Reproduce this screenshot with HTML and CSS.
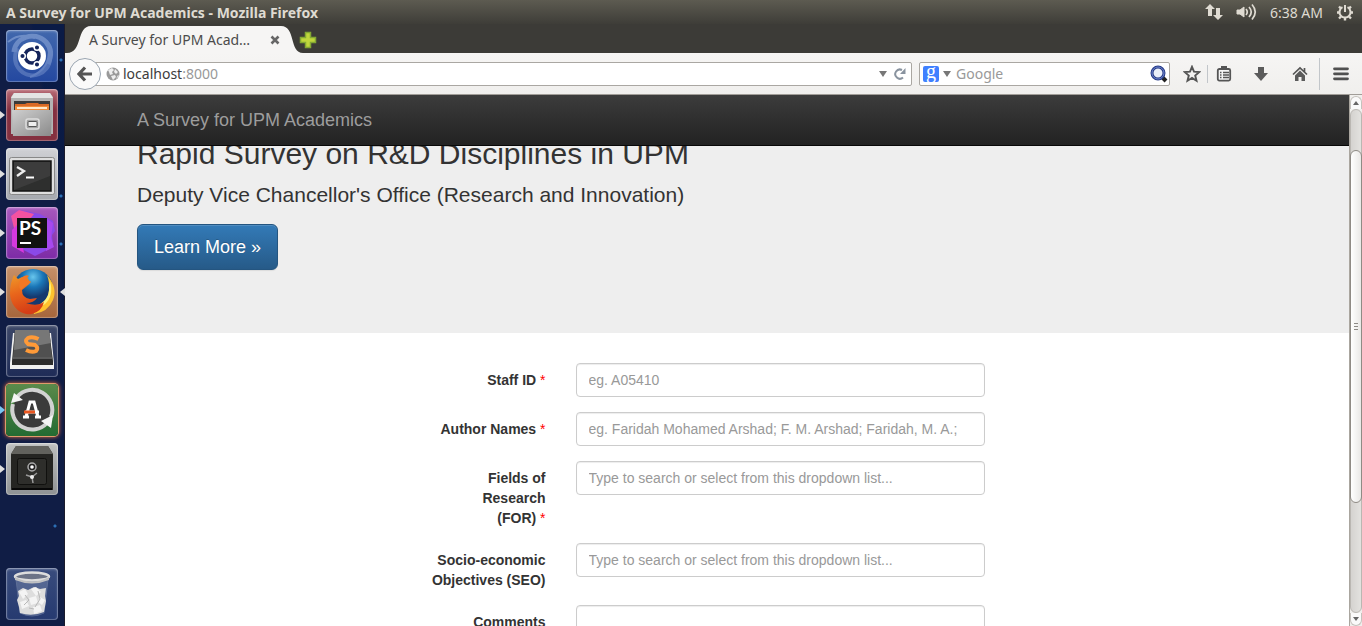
FILE: index.html
```html
<!DOCTYPE html>
<html lang="en">
<head>
<meta charset="utf-8">
<title>A Survey for UPM Academics</title>
<link rel="stylesheet" href="styles.css">
</head>
<body>
<div class="desktop">
  <header class="panel">
    <span class="panel-title">A Survey for UPM Academics - Mozilla Firefox</span>
    <div class="indicators">
      <svg width="18" height="18" viewBox="0 0 18 18" fill="#dfdbd2"><path d="M5 1l5 5H7v7H3V6H0zM13 17l-5-5h3V5h4v7h3z"/></svg>
      <svg width="21" height="18" viewBox="0 0 21 18" fill="none" stroke="#dfdbd2" stroke-width="1.7"><path d="M1 7h3l4-3v10l-4-3H1z" fill="#dfdbd2" stroke-width="1"/><path d="M10 6q2.500 3 0 6M13 4q4.500 5 0 10M16 1.500q6.500 7.500 0 15"/></svg>
      <time class="clock">6:38 AM</time>
      <svg width="18" height="18" viewBox="0 0 18 18" fill="none" stroke="#dfdbd2" stroke-width="2"><path d="M6.500 4.200a5.500 5.500 0 1 0 5 0M9 2v7"/><path d="M1 9.500h2.500M14.500 9.500H17M9 15v2.500M3 3.500l2 2M15 3.500l-2 2M3 15.500l2-2M15 15.500l-2-2" stroke-width="2.400"/></svg>
    </div>
  </header>

  <div class="workspace">
    <nav class="launcher" aria-label="Launcher">
      <button class="app app-dash" aria-label="Dash">
        <svg viewBox="0 0 52 52"><g fill="none" stroke="#b5c9ef" opacity=".4"><path d="M8 22C9 8 28 0 40 12q8 9 2 22" stroke-width="5"/><path d="M44 29C43 44 25 51 14 40Q6 32 11 18" stroke-width="4" opacity=".7"/><path d="M2 12Q14 2 29 8M43 17q2 22-19 30" stroke-width="2"/></g><circle cx="26" cy="26" r="14" fill="#fff"/><circle cx="26" cy="26" r="7" fill="none" stroke="#15245a" stroke-width="3.500"/><g stroke="#fff" stroke-width="1.500" fill="#15245a"><circle cx="16.500" cy="26" r="2.800"/><circle cx="31" cy="17.500" r="2.800"/><circle cx="31" cy="34.500" r="2.800"/></g></svg>
      </button>
      <button class="app app-files running" aria-label="Files">
        <svg viewBox="0 0 52 52"><defs><linearGradient id="steel" x2="1" y2="1"><stop stop-color="#cfcfcf"/><stop offset="1" stop-color="#8a8a8a"/></linearGradient></defs><path d="M5 8l3-4h36l3 4v37H5z" fill="#b4b4b4"/><path d="M5 9l3-5h36l3 5z" fill="#e4e4e4"/><path d="M8 12h36v11H8z" fill="#3a3a3a"/><path d="M9 15h10l2-1h11l1 1h10v8H9z" fill="#d96a27"/><path d="M9 17h34v5H9z" fill="#f08c3c"/><path d="M11 18h30v2H11z" fill="#ffe9cc"/><path d="M6 21h40l-1 26H7z" fill="url(#steel)"/><rect x="20" y="30" width="13" height="10" rx="2" fill="#a4a4a4" stroke="#dedede" stroke-width="1.500"/><rect x="22" y="32.500" width="9" height="5" rx="1" fill="#eee" stroke="#555"/></svg>
      </button>
      <button class="app app-terminal running" aria-label="Terminal">
        <svg viewBox="0 0 52 52"><rect x="3.500" y="9.500" width="45" height="37" rx="2" fill="#dedede" stroke="#888"/><rect x="7" y="13" width="38" height="30" fill="#2e2f2e" stroke="#131313" stroke-width="1.500"/><path d="M8 14h36v14L8 42z" fill="#565656" opacity=".35"/><path d="M11 19l7 4-7 5" fill="none" stroke="#eee" stroke-width="2.300"/><path d="M20 29.500h8" stroke="#fff" stroke-width="2"/></svg>
      </button>
      <button class="app app-phpstorm running" aria-label="PhpStorm">
        <svg viewBox="0 0 52 52"><path d="M5 9L13 3l21 4 13 7 2 10-3 4 1 12-18 9-15-8-8-3 3-19z" fill="#8a49e8"/><path d="M5 9L13 3l15 4-12 15-7 3z" fill="#f552a0"/><path d="M6 23l7-7 5 30-12-7z" fill="#d638df"/><path d="M38 10l9 6-2 15 3 9-8 4z" fill="#a748ef"/><rect x="11" y="11" width="30" height="30" fill="#111"/><path d="M14 36h11" stroke="#fff" stroke-width="2"/><text x="13" y="28" class="ps-text">PS</text></svg>
      </button>
      <button class="app app-firefox running active" aria-label="Firefox">
        <svg viewBox="0 0 52 52"><defs><radialGradient id="globe" cx=".5" cy=".2"><stop stop-color="#68c6ed"/><stop offset=".5" stop-color="#1976b7"/><stop offset="1" stop-color="#15396f"/></radialGradient><linearGradient id="fox" y2="1" x2=".3"><stop stop-color="#ef9a29"/><stop offset=".5" stop-color="#e8641b"/><stop offset="1" stop-color="#d53d16"/></linearGradient></defs><circle cx="27" cy="23" r="20" fill="url(#globe)"/><path d="M41 9q11 13 6 25T28 48l-2-8q15 0 17-15 1-8-2-16z" fill="#ffc22e"/><path d="M44 15q4 15-5 23-5 4-11 3 16-6 15-20z" fill="#fff07a"/><path d="M8 9l4 4q5-3 9-2l3 5-3 4-5 4q0 8 8 9l7-1q-3 5-11 5 11 4 18-1-2 9-12 12C15 50 4 40 4 27q0-10 4-18z" fill="url(#fox)"/><path d="M15 12q5-4 8-2-3 2-3 5 4-1 5 1-2 3-6 4l-4 4q-4-4 0-12z" fill="#f27824"/></svg>
      </button>
      <button class="app app-sublime" aria-label="Sublime Text">
        <svg viewBox="0 0 52 52"><path d="M4 38L7 8h38l3 30v6H4z" fill="#f0f0f0"/><path d="M6 36L9 5h34l4 31v4H6z" fill="#2c2c2c"/><path d="M9 5h34l3 27H7z" fill="#505050"/><path d="M9 5h34l2 13L8 25z" fill="#777"/><path d="M7 33h39" stroke="#8a8a8a"/><path d="M32.500 14q-6-3-10.500-1-4 3 0 6l7 1q4 3 1 6-4 2-10-1" fill="none" stroke="#ff9a38" stroke-width="4"/></svg>
      </button>
      <button class="app app-updater running alert" aria-label="Software Updater">
        <svg viewBox="0 0 52 52"><circle cx="26" cy="26" r="19" fill="#3b3b3b"/><path d="M11 13a20 20 0 0 1 34 20M41 39A20 20 0 0 1 7 20" fill="none" stroke="#d2d2d2" stroke-width="4"/><path d="M5 19l3-10 9 7zM47 31l-2 13-10-7z" fill="#f4f4f4"/><path d="M20 33l4-15h4l4 15M17 33h6M29 33h6" fill="none" stroke="#fff" stroke-width="3"/><path d="M19 28h14" stroke="#fff" stroke-width="3"/><path d="M18 28h11" stroke="#e95721" stroke-width="3"/></svg>
      </button>
      <button class="app app-safe running" aria-label="Passwords">
        <svg viewBox="0 0 52 52"><path d="M5 11l5-8h32l5 8v36H5z" fill="#34342f"/><path d="M5 11l5-8h32l5 8z" fill="#62625d"/><rect x="5" y="11" width="42" height="36" rx="2" fill="#252522"/><rect x="11.500" y="15.500" width="29" height="26" rx="2" fill="#2e2e2b" stroke="#10100e"/><circle cx="26" cy="24" r="4" fill="#222" stroke="#aaa" stroke-width="1.500"/><circle cx="26" cy="24" r="1.800" fill="#fff"/><path d="M26 34l-6-2M26 34l5-4M26 34l1 6" stroke="#999" stroke-width="1.500"/><circle cx="26" cy="34" r="2" fill="#eee"/><path d="M6 46h40" stroke="#080808" stroke-width="2"/></svg>
      </button>
      <button class="app app-trash" aria-label="Trash">
        <svg viewBox="0 0 52 52"><path d="M10 11l4 34q12 6 24 0l4-34z" fill="#b7c5dc" opacity=".25" stroke="#dce5f2"/><path d="M12 23l5-3 5 2 6-3 6 2 6-1-1 8 1 5-2 11q-12 5-24 1l-1-6-2-7 2-4z" fill="#ddd"/><g fill="#f4f4f4"><path d="M13 24l6-3 3 5-5 5zM25 21l5-2 5 5-5 4zM23 30l7-2 2 7-7 2zM34 29l5 3-3 5-4-3zM14 34l6-2 3 6-7 3zM27 39l7-2 2 6-8 3z"/></g><path d="M19 27l4 5-5 5M32 23l2 8-5 8M23 40l5 1" stroke="#b8b8b8" fill="none"/><ellipse cx="26" cy="8.500" rx="17" ry="4" fill="#6c7386" stroke="#ddd" stroke-width="2.500"/><path d="M9 9q17 9 34 0v3q-17 7-34 0z" fill="#bfc0c2"/></svg>
      </button>
    </nav>

    <div class="browser">
      <div class="tabs">
        <button class="tab" aria-label="A Survey for UPM Academics">
          <svg class="tab-shape" viewBox="0 0 236 28" preserveAspectRatio="none"><path d="M0 28C16 28 9 1 24 1H214C229 1 222 28 236 28z" fill="#f6f5f4"/></svg>
          <span class="tab-title">A Survey for UPM Acad…</span>
          <svg width="10" height="10" viewBox="0 0 10 10"><path d="M1.500 1.500l7 7M8.500 1.500l-7 7" stroke="#666" stroke-width="2.600"/></svg>
        </button>
        <button class="new-tab" aria-label="Open new tab"><svg width="18" height="18" viewBox="0 0 18 18"><path d="M6.500 1.500h5v5h5v5h-5v5h-5v-5h-5v-5h5z" fill="#bfd63c" stroke="#83a832" stroke-width="1.500"/></svg></button>
      </div>

      <div class="toolbar">
        <button class="back" aria-label="Back"><svg width="16" height="16" viewBox="0 0 16 16"><path d="M8 1.500L2 8l6 6.500M2.500 8H15" fill="none" stroke="#555" stroke-width="3.200"/></svg></button>
        <div class="address">
          <svg width="14" height="14" viewBox="0 0 14 14"><circle cx="7" cy="7" r="6.500" fill="#999"/><path d="M2 3l4-2 2 2-2 2 1 2-3 1-1-3zM9 2l3 3-2 2-2-2zM5 9l4-1 1 2-3 3zM12 8l1 1-3 3z" fill="#eee"/></svg>
          <span class="url" role="textbox" aria-label="Address">localhost<span class="port">:8000</span></span>
          <svg width="8" height="6" viewBox="0 0 8 6"><path d="M0 0h8L4 6z" fill="#777"/></svg>
          <button class="plain" aria-label="Reload"><svg width="12" height="12" viewBox="0 0 12 12"><path d="M9 9.500A4.600 4.600 0 1 1 8 2" fill="none" stroke="#89939f" stroke-width="2"/><path d="M11.500 0v6H6z" fill="#89939f"/></svg></button>
        </div>
        <div class="search">
          <span class="engine">g</span>
          <svg width="8" height="6" viewBox="0 0 8 6"><path d="M0 0h8L4 6z" fill="#777"/></svg>
          <input class="search-input" type="text" placeholder="Google" aria-label="Search">
          <button class="plain" aria-label="Search"><svg width="18" height="18" viewBox="0 0 18 18"><path d="M12 12l4 4" stroke="#222" stroke-width="4"/><circle cx="8" cy="8" r="6" fill="#e9eef9" stroke="#263a86" stroke-width="3"/><circle cx="8" cy="8" r="6" fill="none" stroke="#6e86cf" stroke-width="1"/></svg></button>
        </div>
        <button class="tool tool-star" aria-label="Bookmark this page"><svg width="18" height="18" viewBox="0 0 18 18"><path d="M9 1.800l2 4.900 5.200.4-4 3.400 1.300 5.200L9 12.900l-4.500 2.800 1.300-5.200-4-3.400 5.200-.4z" fill="none" stroke="#555" stroke-width="1.900"/></svg></button>
        <span class="divider"></span>
        <button class="tool tool-marks" aria-label="Bookmarks"><svg width="16" height="16" viewBox="0 0 16 16"><rect x="1.800" y="3" width="12.400" height="11.600" rx="1.500" fill="#f5f5f5" stroke="#555" stroke-width="1.800"/><path d="M5 0h6v4H5z" fill="#555"/><path d="M4 6.500h1.500M4 9h1.500M4 11.500h1.500M7 6.500h6M7 9h6M7 11.500h6" stroke="#555" stroke-width="1.300"/></svg></button>
        <button class="tool tool-down" aria-label="Downloads"><svg width="16" height="16" viewBox="0 0 16 16"><path d="M5 1h6v6h4l-7 8-7-8h4z" fill="#5b5b5b"/></svg></button>
        <button class="tool" aria-label="Home"><svg width="16" height="16" viewBox="0 0 16 16"><path d="M1 8.500L8 2l7 6.500M12.500 2v4" fill="none" stroke="#555" stroke-width="1.700"/><path d="M3 9.500l5-5 5 5V15h-3.500v-4h-3v4H3z" fill="#5b5b5b"/></svg></button>
        <span class="divider divider-tall"></span>
        <button class="tool tool-menu" aria-label="Open menu"><svg width="16" height="14" viewBox="0 0 16 14"><path d="M1.500 1.800h13M1.500 6.800h13M1.500 11.800h13" stroke="#505050" stroke-width="2.800" stroke-linecap="round"/></svg></button>
      </div>

      <div class="viewport">
        <div class="page">
          <nav class="navbar"><div class="container"><a class="brand" href="#">A Survey for UPM Academics</a></div></nav>
          <section class="jumbotron">
            <div class="container">
              <h2>Rapid Survey on R&amp;D Disciplines in UPM</h2>
              <p>Deputy Vice Chancellor's Office (Research and Innovation)</p>
              <a class="btn" href="#">Learn More »</a>
            </div>
          </section>
          <form class="survey">
            <label for="staff">Staff ID <span class="required">*</span></label>
            <input id="staff" type="text" placeholder="eg. A05410">
            <label for="authors">Author Names <span class="required">*</span></label>
            <input id="authors" type="text" placeholder="eg. Faridah Mohamed Arshad; F. M. Arshad; Faridah, M. A.;">
            <label for="for">Fields of<br>Research<br>(FOR) <span class="required">*</span></label>
            <input id="for" type="text" placeholder="Type to search or select from this dropdown list...">
            <label for="seo">Socio-economic Objectives (SEO)</label>
            <input id="seo" type="text" placeholder="Type to search or select from this dropdown list...">
            <label for="comments">Comments</label>
            <textarea id="comments" rows="3"></textarea>
          </form>
        </div>
        <div class="scrollbar" aria-hidden="true">
          <span class="step"><svg width="6" height="4" viewBox="0 0 6 4"><path d="M0 4l3-4 3 4z" fill="#666"/></svg></span>
          <div class="track"><span class="thumb"><i></i><i></i><i></i></span></div>
          <span class="step step-end"><svg width="6" height="4" viewBox="0 0 6 4"><path d="M0 0l3 4 3-4z" fill="#666"/></svg></span>
        </div>
      </div>
    </div>
  </div>
</div>
</body>
</html>
```
FILE: styles.css
```css
* { box-sizing: border-box; }
body { margin: 0; overflow: hidden; font-family: "Noto Sans", "Open Sans", sans-serif; }
button { border: 0; padding: 0; background: none; font: inherit; }
svg { display: block; flex: none; }

.desktop { display: flex; flex-direction: column; height: 100vh; }
.panel {
  display: flex; justify-content: space-between; align-items: center;
  flex: none; height: 24px; padding: 0 8px 0 6px;
  background: linear-gradient(#5d5b51, #3e3d38); color: #dfdbd2;
}
.panel-title { font-size: 14px; font-weight: 700; }
.indicators { display: flex; align-items: center; gap: 13px; }
.clock { font-size: 14px; }
.workspace { display: flex; flex: 1; min-height: 0; }

.launcher {
  display: flex; flex-direction: column; gap: 7px; flex: none;
  width: 65px; padding: 6px 7px 6px 6px; border-right: 1px solid #1b1b2c;
  background:
    radial-gradient(circle at 61px 36px, #2b6fb5 1px, transparent 2px),
    radial-gradient(circle at 61px 172px, #2b6fb5 1px, transparent 2px),
    radial-gradient(circle at 61px 220px, #2b6fb5 1px, transparent 2px),
    radial-gradient(circle at 55px 502px, #2b6fb5 1px, transparent 2px),
    radial-gradient(ellipse at 0 570px, #101d45 70px, transparent 72px),
    linear-gradient(#0a1b46, #0b1a43 60%, #12245e);
}
.app { position: relative; flex: none; width: 52px; height: 52px; border-radius: 4px; box-shadow: inset 0 0 0 1px rgba(255, 255, 255, .22), inset 0 1px 3px rgba(255, 255, 255, .4); }
.app svg { width: 52px; height: 52px; }
.app-dash { background: linear-gradient(#4168ad, #2448a0); }
.app-files { background: linear-gradient(#b96c77, #842f40 40%, #84303f); }
.app-terminal { background: linear-gradient(#d0d1d5, #a5a8ae); }
.app-phpstorm { background: linear-gradient(#a858bd, #7d2ba6); }
.app-firefox { background: linear-gradient(#c79069, #a6663c); }
.app-sublime { background: linear-gradient(#3d4868, #1e2b57); }
.app-updater { background: linear-gradient(#5a8a4b, #246b32); }
.app-safe { background: linear-gradient(#bdbfbe, #8f9294); }
.app-trash { margin-top: auto; background: linear-gradient(#394c7d, #263a70); }
.alert { box-shadow: 0 0 0 1px #e09a6b, 0 0 4px 1px #df6b3e; }
.running::before, .active::after {
  content: ""; position: absolute; top: 22px; left: -6px;
  border: 4px solid transparent; border-left: 5px solid #dfdfdf; border-right: 0;
}
.active::after { left: auto; right: -7px; border-left: 0; border-right: 5px solid #dfdfdf; }
.alert::before { border-left-color: #79c6f3; }
.ps-text { font: 700 19px Lato, sans-serif; fill: #fff; }

.browser { display: flex; flex-direction: column; flex: 1; min-width: 0; }
.tabs { display: flex; flex: none; height: 29px; padding-left: 2px; background: #3c3b37; }
.tab {
  position: relative; display: flex; align-items: center; justify-content: space-between;
  width: 236px; padding: 2px 23px 0 22px; color: #4c4c4c; font-size: 14px;
}
.tab-shape { position: absolute; left: 0; bottom: 0; width: 100%; height: 28px; }
.tab-title, .tab svg { z-index: 1; }
.tab .tab-shape { z-index: 0; }
.new-tab { display: flex; align-items: center; padding: 2px 0 0; margin-left: -4px; }

.toolbar {
  display: flex; align-items: center; flex: none; height: 42px; padding-left: 4px;
  background: linear-gradient(#f6f5f4, #f0efed); border-bottom: 1px solid #a19d98;
}
.back {
  display: flex; align-items: center; justify-content: center; flex: none; z-index: 1;
  width: 32px; height: 32px; margin-right: -8px; border: 1px solid #9aa5b1; border-radius: 50%; background: #fafafa;
}
.address, .search { display: flex; align-items: center; height: 24px; border: 1px solid #aaa7a2; border-radius: 2px; background: #fff; font-size: 14px; }
.address { flex: 1; gap: 3px; padding: 0 5px 0 12px; color: #3c3c3c; }
.url { flex: 1; }
.port { color: #999; }
.address .plain { margin-left: 4px; }
.search { width: 251px; margin-left: 7px; gap: 4px; padding: 0 1px 0 3px; }
.engine { width: 16px; height: 16px; border-radius: 2px; background: #4080ff; color: #fff; font: 400 20px/11px "Liberation Serif", serif; text-align: center; }
.search-input { flex: 1; min-width: 0; padding: 0 1px; border: 0; outline: 0; background: none; font: inherit; }
.search-input::placeholder { color: #999; opacity: 1; }
.tool { display: flex; align-items: center; justify-content: center; flex: none; width: 38px; height: 32px; }
.tool-star { width: 30px; margin-left: 7px; }
.tool-marks { width: 32px; }
.tool-down { width: 41px; }
.tool-menu { width: 42px; }
.divider { width: 1px; height: 18px; background: #c2c6ca; }
.divider-tall { height: 32px; }

.viewport { display: flex; flex: 1; min-height: 0; }
.page {
  position: relative; flex: 1; min-width: 0; overflow: hidden; background: #fff; color: #333;
  font: 14px/20px "Liberation Sans", Arial, sans-serif;
}
.container { max-width: 1170px; margin: 0 auto; padding: 0 15px; }
.navbar { position: absolute; top: 0; left: 0; right: 0; height: 51px; border-bottom: 1px solid #080808; background: linear-gradient(#3c3c3c, #222); }
.brand { display: inline-block; padding: 15px 0; color: #9d9d9d; font-size: 18px; text-decoration: none; }
.jumbotron { padding: 42px 0 63px; background: #eee; }
.jumbotron h2 { margin: 0 0 10px; font-size: 30px; line-height: 33px; font-weight: 400; }
.jumbotron p { margin: 0 0 14px; font-size: 21px; line-height: 30px; }
.btn {
  display: block; width: fit-content; padding: 10px 16px; border: 1px solid #245580; border-radius: 6px;
  background: linear-gradient(#337ab7, #265a88); color: #fff; font-size: 18px; line-height: 24px; text-decoration: none;
  text-shadow: 0 -1px 0 rgba(0, 0, 0, .2); box-shadow: inset 0 1px 0 rgba(255, 255, 255, .15), 0 1px 1px rgba(0, 0, 0, .08);
}
.survey {
  display: grid; grid-template-columns: minmax(0, 116px) minmax(0, 1fr); gap: 15px 30px; align-items: start;
  max-width: 585px; margin: 30px auto 0; padding: 0 15px;
}
.survey label { padding-top: 7px; font-weight: 700; text-align: right; }
.required { color: #f00; font-weight: 400; }
.survey input, .survey textarea {
  width: 100%; height: 34px; padding: 6px 12px; border: 1px solid #ccc; border-radius: 4px;
  background: #fff; box-shadow: inset 0 1px 1px rgba(0, 0, 0, .075); color: #555; font: inherit;
}
.survey textarea { height: 74px; resize: none; }
.survey ::placeholder { color: #999; opacity: 1; }

.scrollbar { display: flex; flex-direction: column; flex: none; width: 13px; padding-top: 1px; border-left: 1px solid #aaa69f; background: #f0efed; }
.step { display: flex; align-items: center; justify-content: center; height: 13px; border: 1px solid #c5c2bd; border-bottom: 0; border-radius: 6px 6px 0 0; background: #fafafa; }
.step-end { border: 1px solid #c5c2bd; border-top: 0; border-radius: 0 0 6px 6px; }
.track { flex: 1; padding-top: 40px; border: 1px solid #bab7b2; border-radius: 6px; background: linear-gradient(90deg, #d5d3d0, #e3e2df); }
.thumb {
  display: flex; flex-direction: column; align-items: center; justify-content: center; gap: 2px;
  height: 79%; max-height: 353px; margin: 0 -1px; border: 1px solid #8f8b85; border-radius: 6px; background: linear-gradient(90deg, #fff, #e9e8e6);
}
.thumb i { width: 4px; height: 1px; background: #8d8a86; }
```
